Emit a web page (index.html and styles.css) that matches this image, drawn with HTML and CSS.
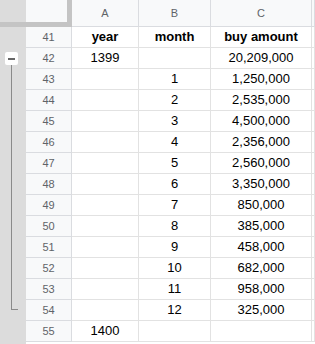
FILE: index.html
```html
<!DOCTYPE html>
<html lang="en">
<head>
    <meta charset="UTF-8">
    <title>Sheet</title>
    <link rel="stylesheet" href="styles.css">
</head>
<body>
    <div class="sheet">
        <!-- row group gutter -->
        <aside class="gutter">
            <div class="gutter-top"></div>
            <div class="gutter-bar"></div>
            <div class="group">
                <button class="group-toggle" aria-label="Collapse rows"><span></span></button>
                <div class="group-line"></div>
            </div>
        </aside>

        <div class="grid">
            <div class="corner"><div class="corner-inner"></div></div>
            <div class="col-head">A</div>
            <div class="col-head">B</div>
            <div class="col-head">C</div>
            <div class="col-head"></div>

            <div class="row-head">41</div>
            <div class="cell bold">year</div>
            <div class="cell bold">month</div>
            <div class="cell bold">buy amount</div>
            <div class="cell"></div>

            <div class="row-head">42</div>
            <div class="cell">1399</div>
            <div class="cell"></div>
            <div class="cell">20,209,000</div>
            <div class="cell"></div>

            <div class="row-head">43</div>
            <div class="cell"></div>
            <div class="cell">1</div>
            <div class="cell">1,250,000</div>
            <div class="cell"></div>

            <div class="row-head">44</div>
            <div class="cell"></div>
            <div class="cell">2</div>
            <div class="cell">2,535,000</div>
            <div class="cell"></div>

            <div class="row-head">45</div>
            <div class="cell"></div>
            <div class="cell">3</div>
            <div class="cell">4,500,000</div>
            <div class="cell"></div>

            <div class="row-head">46</div>
            <div class="cell"></div>
            <div class="cell">4</div>
            <div class="cell">2,356,000</div>
            <div class="cell"></div>

            <div class="row-head">47</div>
            <div class="cell"></div>
            <div class="cell">5</div>
            <div class="cell">2,560,000</div>
            <div class="cell"></div>

            <div class="row-head">48</div>
            <div class="cell"></div>
            <div class="cell">6</div>
            <div class="cell">3,350,000</div>
            <div class="cell"></div>

            <div class="row-head">49</div>
            <div class="cell"></div>
            <div class="cell">7</div>
            <div class="cell">850,000</div>
            <div class="cell"></div>

            <div class="row-head">50</div>
            <div class="cell"></div>
            <div class="cell">8</div>
            <div class="cell">385,000</div>
            <div class="cell"></div>

            <div class="row-head">51</div>
            <div class="cell"></div>
            <div class="cell">9</div>
            <div class="cell">458,000</div>
            <div class="cell"></div>

            <div class="row-head">52</div>
            <div class="cell"></div>
            <div class="cell">10</div>
            <div class="cell">682,000</div>
            <div class="cell"></div>

            <div class="row-head">53</div>
            <div class="cell"></div>
            <div class="cell">11</div>
            <div class="cell">958,000</div>
            <div class="cell"></div>

            <div class="row-head">54</div>
            <div class="cell"></div>
            <div class="cell">12</div>
            <div class="cell">325,000</div>
            <div class="cell"></div>

            <div class="row-head">55</div>
            <div class="cell">1400</div>
            <div class="cell"></div>
            <div class="cell"></div>
            <div class="cell"></div>
        </div>
    </div>
</body>
</html>
```

FILE: styles.css
```css
* {
    margin: 0;
    padding: 0;
    box-sizing: border-box;
}

body {
    width: 315px;
    height: 344px;
    overflow: hidden;
    background: #fff;
    font-family: 'Liberation Sans', Arial, sans-serif;
}

.sheet {
    display: flex;
    height: 100%;
}

/* left gutter with the row group */
.gutter {
    width: 26px;
    flex-shrink: 0;
    display: flex;
    flex-direction: column;
    background: #dcdcdc;
}

.gutter-top {
    height: 22px;
}

.gutter-bar {
    height: 5px;
    background: #c4c4c4;
}

.group {
    display: flex;
    flex-direction: column;
    padding-top: 25px;
    padding-left: 5px;
}

.group-toggle {
    width: 13px;
    height: 13px;
    border: none;
    border-radius: 2px;
    background: #fff;
    display: flex;
    align-items: center;
    justify-content: center;
}

.group-toggle span {
    width: 7px;
    height: 2px;
    background: #666;
}

.group-line {
    width: 7px;
    height: 245px;
    margin-left: 6px;
    border-left: 1px solid #8a8a8a;
    border-bottom: 1px solid #8a8a8a;
}

/* spreadsheet grid */
.grid {
    flex: 1;
    display: grid;
    grid-template-columns: 46px 67px 72px 101px 1fr;
    grid-auto-rows: 21px;
    grid-template-rows: 27px;
    align-content: start;
    border-bottom: 2px solid #fff;
}

.corner {
    background: #c4c4c4;
    padding-right: 5px;
    padding-bottom: 5px;
}

.corner-inner {
    height: 100%;
    background: #f8f9fa;
}

.col-head {
    background: #f8f9fa;
    border-right: 1px solid #dadce0;
    border-bottom: 1px solid #dadce0;
    color: #5f6368;
    font-size: 11px;
    display: flex;
    align-items: center;
    justify-content: center;
    padding-bottom: 1px;
}

.row-head {
    background: #f8f9fa;
    border-right: 1px solid #dadce0;
    border-bottom: 1px solid #dadce0;
    color: #5f6368;
    font-size: 11px;
    display: flex;
    align-items: center;
    justify-content: center;
}

.cell {
    border-right: 1px solid #e2e2e2;
    border-bottom: 1px solid #e2e2e2;
    font-size: 13px;
    color: #000;
    line-height: 20px;
    text-align: center;
    white-space: nowrap;
    overflow: hidden;
}

.bold {
    font-weight: bold;
}
```
